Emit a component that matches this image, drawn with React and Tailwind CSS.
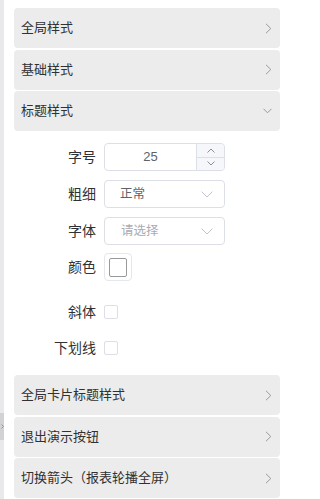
import React from "react";

const font = { fontFamily: '"Liberation Sans", "Noto Sans CJK SC", sans-serif' };

function ChevronRight() {
  return (
    <svg width="7" height="11" viewBox="0 0 7 11" fill="none">
      <path d="M1 0.8 L5.8 5.5 L1 10.2" stroke="#9a9a9a" strokeWidth="1" />
    </svg>
  );
}
function ChevronDown() {
  return (
    <svg width="9" height="6" viewBox="0 0 9 6" fill="none">
      <path d="M0.5 0.8 L4.5 4.8 L8.5 0.8" stroke="#9a9a9a" strokeWidth="1" />
    </svg>
  );
}
function SelectArrow() {
  return (
    <svg width="12" height="7" viewBox="0 0 12 7" fill="none">
      <path d="M0.6 0.6 L6 6 L11.4 0.6" stroke="#c0c4cc" strokeWidth="1" />
    </svg>
  );
}
function SmallArrow({ up }) {
  return (
    <svg width="8" height="5" viewBox="0 0 8 5" fill="none">
      <path d={up ? "M0.5 4.5 L4 1 L7.5 4.5" : "M0.5 0.5 L4 4 L7.5 0.5"} stroke="#8c8f96" strokeWidth="1" />
    </svg>
  );
}

function Card({ title, open }) {
  return (
    <div className="h-[40px] bg-[#ececec] rounded-[4px] flex items-center justify-between pl-[7px] pr-[8px] text-[13px] text-[#303133]">
      <span>{title}</span>
      {open ? <ChevronDown /> : <ChevronRight />}
    </div>
  );
}

function Row({ label, children, className = "" }) {
  return (
    <div className={"flex items-center h-[28px] " + className}>
      <div className="w-[82px] text-right text-[14px] text-[#303133] leading-none">{label}</div>
      <div className="ml-[8px] flex items-center">{children}</div>
    </div>
  );
}

export default function App() {
  return (
    <div className="flex w-[282px] h-[499px] bg-white overflow-hidden" style={font}>
      <div className="w-[4px] h-full bg-[#e9e9eb] flex flex-col">
        <div className="h-[413px]" />
        <div className="h-[27px] bg-[#d2d2d4] flex items-center justify-end">
          <svg width="3" height="5" viewBox="0 0 3 5" fill="none">
            <path d="M0.5 0.5 L2.5 2.5 L0.5 4.5" stroke="#888" strokeWidth="0.8" />
          </svg>
        </div>
      </div>
      <div className="flex-1 pl-[10px] pr-[2px] pt-[8px]">
        <div className="flex flex-col gap-[1.5px]">
          <Card title="全局样式" />
          <Card title="基础样式" />
          <Card title="标题样式" open />
        </div>
        <div className="pt-[12px] pb-[13px]">
          <Row label="字号">
            <div className="w-[121px] h-[28px] border border-[#dcdfe6] rounded-[4px] flex overflow-hidden">
              <div className="flex-1 flex items-center justify-center text-[13px] text-[#606266]">25</div>
              <div className="w-[28px] border-l border-[#dcdfe6] bg-[#f5f7fa] flex flex-col">
                <div className="flex-1 flex items-center justify-center border-b border-[#dcdfe6]">
                  <SmallArrow up />
                </div>
                <div className="flex-1 flex items-center justify-center">
                  <SmallArrow />
                </div>
              </div>
            </div>
          </Row>
          <Row label="粗细" className="mt-[9px]">
            <div className="w-[121px] h-[28px] border border-[#dcdfe6] rounded-[4px] flex items-center justify-between pl-[15px] pr-[11px] text-[12.5px] text-[#606266]">
              <span>正常</span>
              <SelectArrow />
            </div>
          </Row>
          <Row label="字体" className="mt-[9px]">
            <div className="w-[121px] h-[28px] border border-[#dcdfe6] rounded-[4px] flex items-center justify-between pl-[16px] pr-[11px] text-[12.5px] text-[#a8abb2]">
              <span>请选择</span>
              <SelectArrow />
            </div>
          </Row>
          <Row label="颜色" className="mt-[8px]">
            <div className="w-[28px] h-[28px] border border-[#e4e7ed] rounded-[4px] flex items-center justify-center">
              <div className="w-[18px] h-[19px] border border-[#999] rounded-[2px]" />
            </div>
          </Row>
          <Row label="斜体" className="mt-[17px]">
            <div className="w-[14px] h-[14px] border border-[#dcdfe6] rounded-[2px] bg-white" />
          </Row>
          <Row label="下划线" className="mt-[8px]">
            <div className="w-[14px] h-[14px] border border-[#dcdfe6] rounded-[2px] bg-white" />
          </Row>
        </div>
        <div className="flex flex-col gap-[1.5px]">
          <Card title="全局卡片标题样式" />
          <Card title="退出演示按钮" />
          <Card title="切换箭头（报表轮播全屏）" />
        </div>
      </div>
    </div>
  );
}
